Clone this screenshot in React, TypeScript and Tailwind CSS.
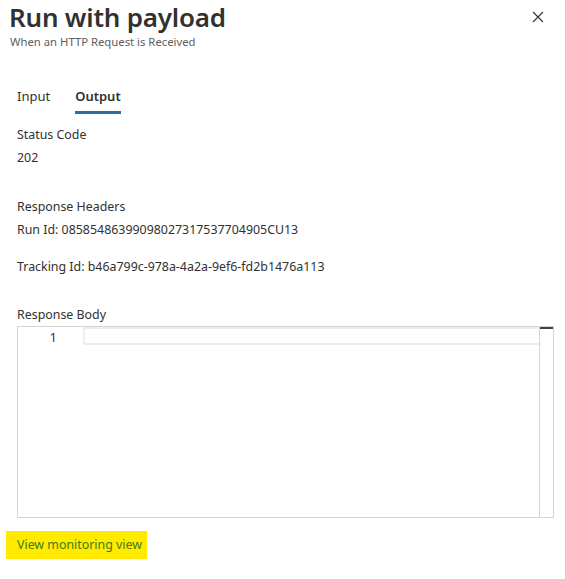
export default function App() {
  return (
    <main
      className="w-[565px] h-[579px] bg-white text-[#323130] relative"
      style={{ fontFamily: '"Noto Sans", "Open Sans", sans-serif' }}
    >
      {/* Header */}
      <header className="pl-[9px]">
        <h1 className="text-[26px] leading-[35px] font-semibold text-[#323130] tracking-[-0.2px]">
          Run with payload
        </h1>
        <p className="text-[11.3px] leading-[13px] text-[#605e5c] pl-[1px]">
          When an HTTP Request is Received
        </p>
      </header>

      <button className="absolute left-[531px] top-[10px] w-[14px] h-[14px] flex items-center justify-center text-[#323130]">
        <svg width="12" height="12" viewBox="0 0 12 12" fill="none" stroke="currentColor" strokeWidth="1.1">
          <path d="M1 1L11 11M11 1L1 11" />
        </svg>
      </button>

      {/* Tabs */}
      <nav className="flex gap-[25px] pl-[17px] mt-[35px] text-[13px]">
        <span className="text-[#323130] pt-[4px]">Input</span>
        <span className="font-semibold text-[#323130] pt-[4px] pb-[4px] border-b-[3px] border-[#2a6ea6]">Output</span>
      </nav>

      {/* Body */}
      <section className="px-[17px] text-[12.4px] leading-[18px] text-[#323130]">
        <div className="mt-[12px]">Status Code</div>
        <div className="mt-[5px]">202</div>

        <div className="mt-[31px]">Response Headers</div>
        <div className="mt-[5px]">Run Id: 08585486399098027317537704905CU13</div>
        <div className="mt-[19px]">Tracking Id: b46a799c-978a-4a2a-9ef6-fd2b1476a113</div>

        <div className="mt-[30px]">Response Body</div>
        <div className="mt-[2px] h-[192px] w-[537px] border border-[#d4d4d4] flex">
          <div className="w-[65px] text-right pr-[26px] text-[13px] leading-[18px] text-[#2b2b8a] pt-[1px]">1</div>
          <div className="flex-1 flex">
            <div className="flex-1 h-[18px] border-2 border-[#eeeeee] border-r-0"></div>
            <div className="w-[14px] border-l border-[#d4d4d4] flex flex-col">
              <div className="h-[2px] bg-[#424242]"></div>
            </div>
          </div>
        </div>
      </section>

      {/* Footer link */}
      <div className="pl-[6px] mt-[13px]">
        <a className="inline-block bg-[#ffea00] pl-[11px] pr-[5px] py-[4px] text-[12.4px] leading-[20px] text-[#3e7d1d]">
          View monitoring view
        </a>
      </div>
    </main>
  )
}
